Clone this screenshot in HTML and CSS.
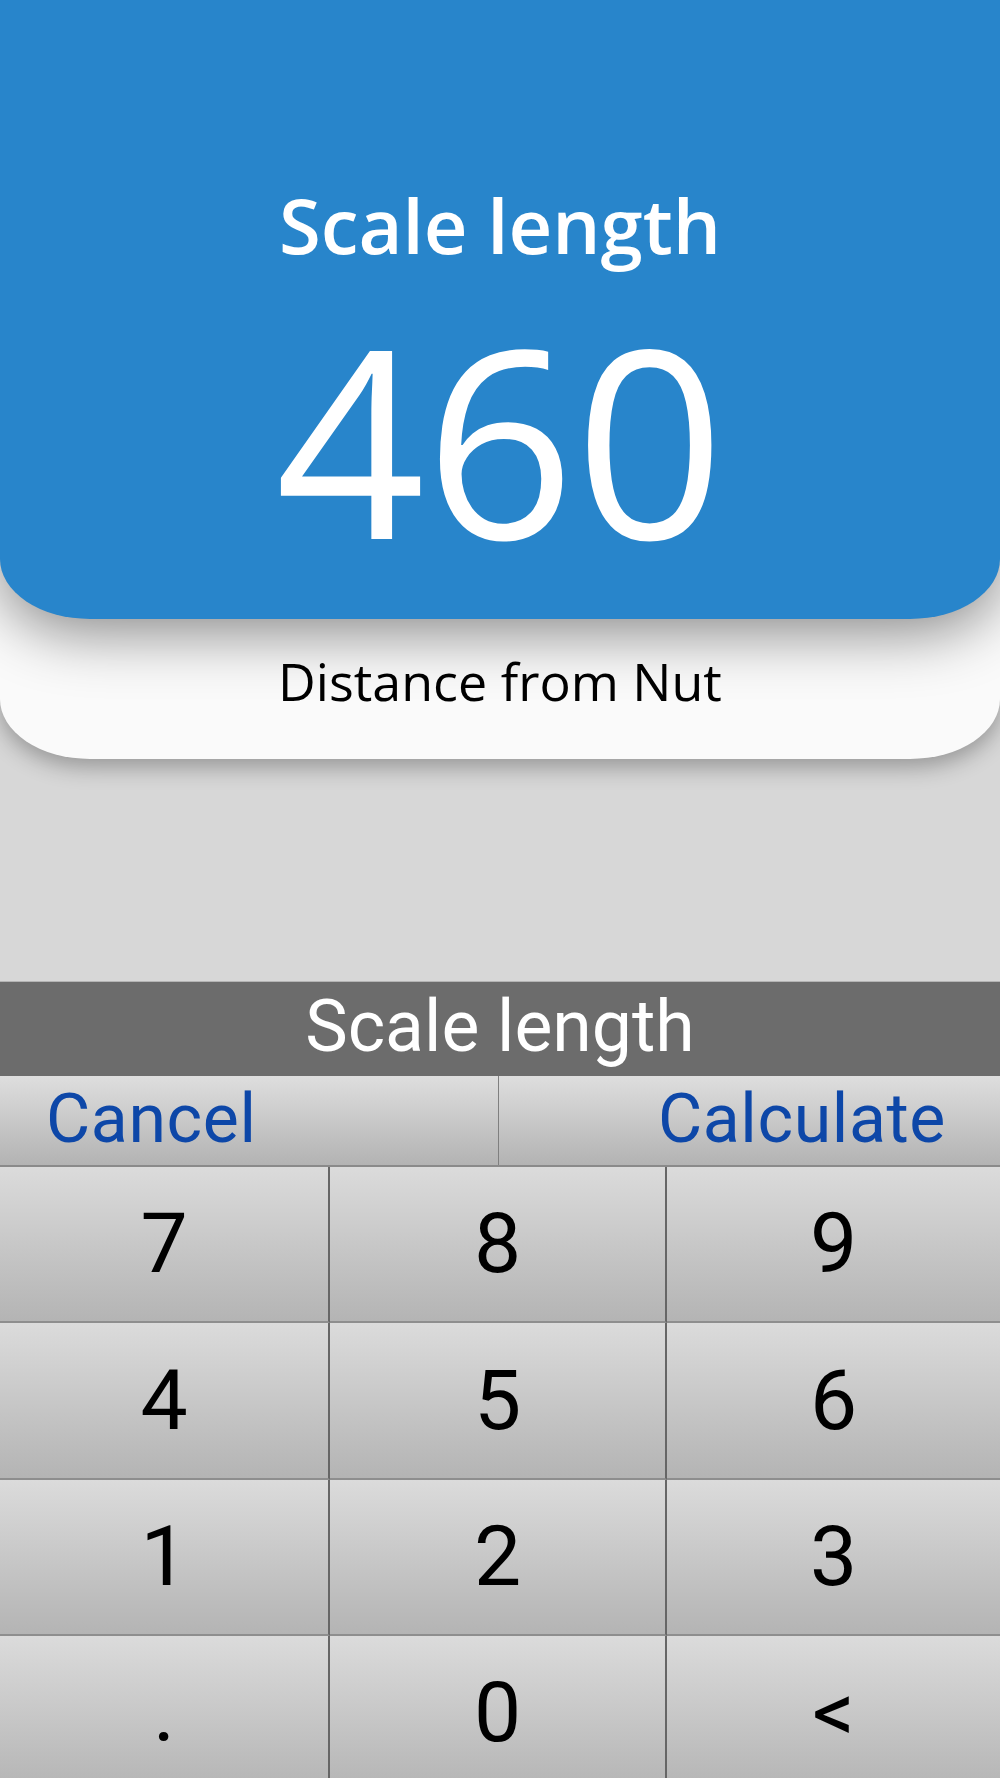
FILE: index.html
```html
<!DOCTYPE html>
<html lang="en">
<head>
<meta charset="utf-8">
<title>Scale length</title>
<link rel="stylesheet" href="styles.css">
</head>
<body>
<div class="screen">
  <section class="card">
    <div class="card-head">
      <div class="card-title">Scale length</div>
      <div class="card-value">460</div>
    </div>
    <div class="card-sub">Distance from Nut</div>
  </section>

  <section class="dialog">
    <div class="dialog-title">Scale length</div>
    <div class="dialog-actions">
      <div class="action action-left" role="button">Cancel</div>
      <div class="action action-right" role="button">Calculate</div>
    </div>
    <div class="keypad">
      <div class="key" role="button">7</div>
      <div class="key" role="button">8</div>
      <div class="key" role="button">9</div>
      <div class="key" role="button">4</div>
      <div class="key" role="button">5</div>
      <div class="key" role="button">6</div>
      <div class="key" role="button">1</div>
      <div class="key" role="button">2</div>
      <div class="key" role="button">3</div>
      <div class="key" role="button">.</div>
      <div class="key" role="button">0</div>
      <div class="key" role="button">&lt;</div>
    </div>
  </section>
</div>
</body>
</html>
```

FILE: styles.css
```css
html, body {
  margin: 0;
  padding: 0;
  height: 1778px;
  overflow: hidden;
}

body {
  background: #d7d7d7;
  font-family: "Open Sans", "DejaVu Sans", sans-serif;
}

.screen {
  display: flex;
  flex-direction: column;
  height: 1778px;
}

/* ---------- top card ---------- */
.card {
  background: #fafafa;
  border-radius: 0 0 90px 90px / 0 0 60px 60px;
  box-shadow: 0 8px 22px rgba(0, 0, 0, 0.3);
  position: relative;
  z-index: 1;
}

.card-head {
  box-sizing: border-box;
  height: 619px;
  padding-top: 186px;
  background: #2885cb;
  border-radius: 0 0 90px 90px / 0 0 60px 60px;
  box-shadow: 0 14px 60px rgba(0, 0, 0, 0.45);
  display: flex;
  flex-direction: column;
  align-items: center;
  color: #ffffff;
}

.card-title {
  font-size: 76px;
  font-weight: 600;
  line-height: 1;
  margin-top: 1px;
}

.card-value {
  margin-top: 44px;
  font-size: 262px;
  font-weight: 400;
  line-height: 1;
}

.card-sub {
  padding: 36px 0 52px;
  text-align: center;
  font-size: 52px;
  line-height: 1;
  color: #000000;
}

/* ---------- dialog ---------- */
.dialog {
  margin-top: 222px;
  display: flex;
  flex-direction: column;
  font-family: Roboto, "Liberation Sans", sans-serif;
}

.dialog-title {
  box-sizing: border-box;
  height: 95px;
  padding-top: 9px;
  background: #6c6c6c;
  border-top: 1px solid #b4b4b4;
  color: #ffffff;
  font-size: 71.5px;
  line-height: 1;
  text-align: center;
}

.dialog-actions {
  display: grid;
  grid-template-columns: 499px 1fr;
  height: 91px;
  background: linear-gradient(#dedede, #b3b3b3);
  border-bottom: 2px solid #8a8a8a;
  box-sizing: border-box;
}

.action {
  font-size: 68px;
  letter-spacing: 0.6px;
  line-height: 1;
  color: #0d47a8;
  padding-top: 9px;
  box-sizing: border-box;
}

.action-left {
  text-align: left;
  padding-left: 46px;
  border-right: 1px solid #7f7f7f;
}

.action-right {
  text-align: right;
  padding-right: 54px;
}

.keypad {
  display: grid;
  grid-template-columns: 330px 337px 1fr;
  grid-auto-rows: 156.4px;
}

.key {
  border-bottom: 2px solid #8e8e8e;
  background: linear-gradient(#dbdbdb, #b4b4b4);
  font-size: 84px;
  line-height: 1;
  color: #000000;
  display: flex;
  align-items: center;
  justify-content: center;
  box-sizing: border-box;
}

.key:nth-child(3n+1),
.key:nth-child(3n+2) {
  border-right: 2px solid #666666;
}
```
